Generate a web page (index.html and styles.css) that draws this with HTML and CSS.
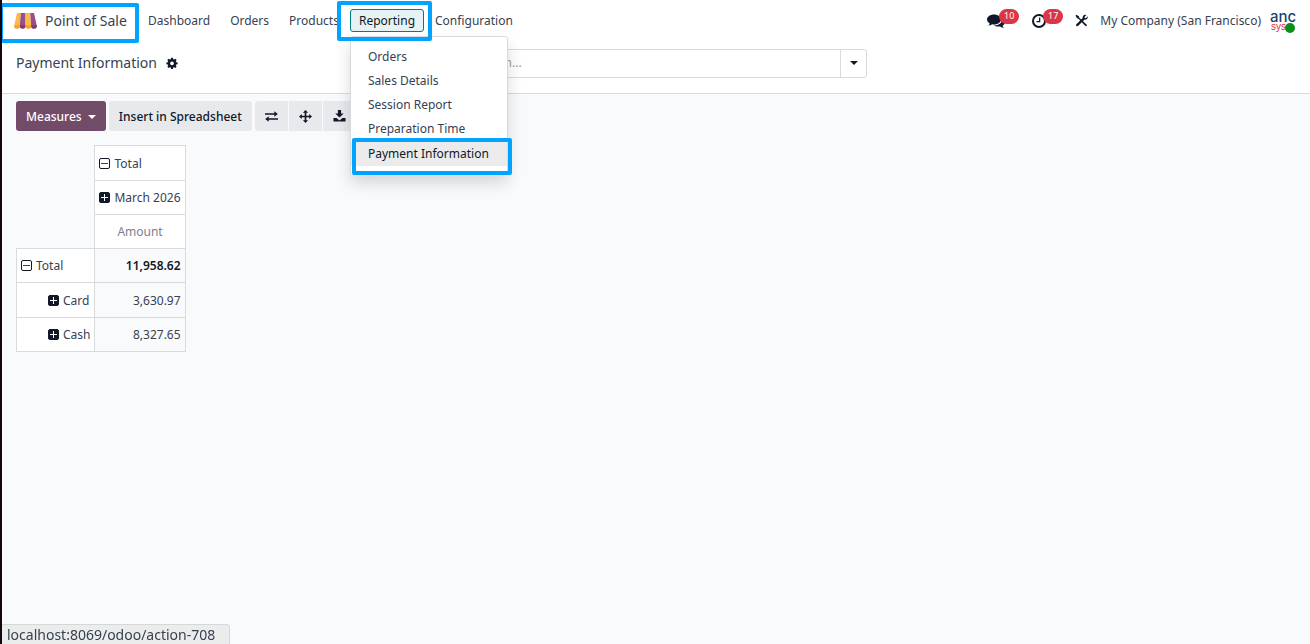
FILE: index.html
```html
<!DOCTYPE html>
<html lang="en">
  <head>
    <meta charset="UTF-8" />
    <meta name="viewport" content="width=device-width, initial-scale=1.0" />
    <title>Payment Information</title>
    <link rel="stylesheet" href="styles.css">
  </head>

  <body>
    <!-- Navbar -->
    <header class="navbar">
      <a class="brand highlight" href="#">
        <svg class="brand-logo" viewBox="0 0 24 18">
          <path fill="#fbb945" d="M3 1h4L6 14.500a3 3 0 0 1-6 0z" />
          <path fill="#985184" d="M7 1h5v13.500a3 3 0 0 1-6 0z" />
          <path fill="#fbb945" d="M12 1h5l1 13.500a3 3 0 0 1-6 0z" />
          <path fill="#985184" d="M17 1h4l3 13.500a3 3 0 0 1-6 0z" />
          <path fill="#f9a02c" d="M0 14h6v.5a3 3 0 0 1-6 0zM12 14h6v.5a3 3 0 0 1-6 0z" />
          <path fill="#7d3b6f" d="M6 14h6v.5a3 3 0 0 1-6 0zM18 14h6v.5a3 3 0 0 1-6 0z" />
        </svg>
        Point of Sale
      </a>
      <nav class="menu">
        <button class="menu-item" type="button">Dashboard</button>
        <button class="menu-item" type="button">Orders</button>
        <button class="menu-item" type="button">Products</button>
        <div class="dropdown">
          <button class="menu-item active highlight" type="button">Reporting</button>
          <ul class="dropdown-menu">
            <li><a href="#">Orders</a></li>
            <li><a href="#">Sales Details</a></li>
            <li><a href="#">Session Report</a></li>
            <li><a href="#">Preparation Time</a></li>
            <li><a class="selected highlight" href="#">Payment Information</a></li>
          </ul>
        </div>
        <button class="menu-item" type="button">Configuration</button>
      </nav>

      <div class="systray">
        <button class="tray-btn" type="button" aria-label="Messages">
          <svg class="tray-icon" viewBox="0 0 18 16">
            <path d="M7 1.500c3.900 0 7 2.200 7 5s-3.100 5-7 5c-.6 0-1.200 0-1.800-.2-1.100.8-2.400 1.200-3.900 1.300.7-.6 1.200-1.300 1.400-2.200C1 9.500 0 8 0 6.500c0-2.800 3.100-5 7-5z" />
            <path d="M15.200 5.500c1.700.9 2.800 2.200 2.800 3.700s-1 2.700-2.400 3.500c.2.800.6 1.400 1.300 2-1.500-.1-2.800-.5-3.900-1.300-2.300.4-4.600 0-6.200-1 4.800.2 8.900-2.500 8.400-6.900z" />
          </svg>
          <span class="badge">10</span>
        </button>
        <button class="tray-btn" type="button" aria-label="Activities">
          <svg class="tray-icon" viewBox="0 0 18 16">
            <circle cx="8" cy="8" r="6" fill="none" stroke="#111827" stroke-width="2" />
            <path d="M8 4.500h1.300V9.300H5.500V8H8z" />
          </svg>
          <span class="badge">17</span>
        </button>
        <button class="tray-btn" type="button" aria-label="Debug">
          <svg class="debug-icon" viewBox="0 0 16 16">
            <path d="M1.500.8l3.300 2 .5 1.800 8.900 8.200c.7.700.5 1.400.1 1.800s-1.200.5-1.800-.1L4.300 5.700l-1.800-.5L.7 2z" />
            <path d="M14 1.300l-2.300 2.300.4 1.200 1.200.4 2.200-2.300c.7 2.500-1.300 4.500-3.700 4L4 14.500c-1.500 1.500-3.700-.6-2.300-2L9.500 5C9 2.500 11.300.3 14 1.300z" />
          </svg>
        </button>
        <button class="company" type="button">My Company (San Francisco)</button>
        <button class="avatar" type="button" aria-label="User menu">
          <svg class="avatar-logo" viewBox="0 0 26 24">
            <text class="logo-top" x="0" y="13">anc</text>
            <text class="logo-bottom" x="1" y="21">sys</text>
            <circle cx="20" cy="19" r="5" fill="#0b8f1a" />
          </svg>
        </button>
      </div>
    </header>

    <!-- Control panel -->
    <div class="control-panel">
      <h1 class="title">
        Payment Information
        <svg class="cog" viewBox="0 0 16 16">
          <path fill-rule="evenodd" d="M6.800 1h2.400l.4 1.900 1.200.5 1.700-1.100 1.700 1.700-1.100 1.700.5 1.200 1.900.4v2.400l-1.900.4-.5 1.200 1.100 1.700-1.700 1.700-1.700-1.100-1.200.5-.4 1.900H6.800l-.4-1.900-1.200-.5-1.700 1.100L1.800 13l1.100-1.700-.5-1.200L.5 9.700V7.300l1.900-.4.5-1.200L1.800 4l1.700-1.700 1.700 1.100 1.200-.5zM8 5.900a2.500 2.500 0 1 0 0 5 2.500 2.500 0 0 0 0-5z" />
        </svg>
      </h1>
      <div class="search">
        <input class="search-input" type="text" placeholder="Search..." aria-label="Search" />
        <button class="search-toggle" type="button" aria-label="Search options"><span class="caret"></span></button>
      </div>
    </div>

    <!-- Pivot view -->
    <main class="pivot">
      <div class="toolbar">
        <button class="btn primary" type="button">Measures <span class="caret"></span></button>
        <button class="btn" type="button">Insert in Spreadsheet</button>
        <div class="btn-group">
          <button class="btn icon-btn" type="button" aria-label="Flip axis">
            <svg class="icon" viewBox="0 0 14 14">
              <path d="M0 3.500h10V1.300L13.800 4.300 10 7.300V5.200H0zM14 8.800H4V6.700L.2 9.700 4 12.700V10.500h10z" />
            </svg>
          </button>
          <button class="btn icon-btn" type="button" aria-label="Expand all">
            <svg class="icon" viewBox="0 0 14 14">
              <path d="M7 0l2.800 3H7.900v3.100H11V4.200L14 7l-3 2.800V7.900H7.900V11h1.900L7 14l-2.800-3h1.900V7.900H3v1.900L0 7l3-2.800v1.900h3.100V3H4.200z" />
            </svg>
          </button>
          <button class="btn icon-btn" type="button" aria-label="Download">
            <svg class="icon" viewBox="0 0 14 14">
              <path d="M5.300 0h3.400v3.700h2.800L7 8.200 2.500 3.700h2.800z" />
              <path d="M.5 8.500h3.300L7 11.300l3.200-2.800h3.300v4H.5z" />
            </svg>
          </button>
        </div>
      </div>

      <table class="pivot-table">
        <tr>
          <td class="empty" rowspan="3"></td>
          <th class="tall"><span class="box minus"></span>Total</th>
        </tr>
        <tr>
          <th><span class="box plus"></span>March 2026</th>
        </tr>
        <tr>
          <th class="measure">Amount</th>
        </tr>
        <tr>
          <th><span class="box minus"></span>Total</th>
          <td class="total">11,958.62</td>
        </tr>
        <tr>
          <th class="child tall"><span class="box plus"></span>Card</th>
          <td>3,630.97</td>
        </tr>
        <tr>
          <th class="child"><span class="box plus"></span>Cash</th>
          <td>8,327.65</td>
        </tr>
      </table>
    </main>

    <div class="status-bar">localhost:8069/odoo/action-708</div>
  </body>
</html>
```
FILE: styles.css
```css
* {
  box-sizing: border-box;
  margin: 0;
  padding: 0;
}

body {
  min-height: 100vh;
  border-left: 2px solid #14060f;
  background-color: #f9fafb;
  color: #374151;
  font-family: "Noto Sans", "Open Sans", sans-serif;
  font-size: 12px;
  line-height: 18px;
}

button,
input {
  border: none;
  background: none;
  color: inherit;
  font: inherit;
}

a {
  color: inherit;
  text-decoration: none;
}

svg {
  display: block;
  fill: #111827;
}

/* blue frames around the steps */
.highlight {
  position: relative;
}

.highlight::after {
  content: "";
  position: absolute;
  z-index: 5;
  border: 4px solid #00a3ff;
  border-radius: 2px;
  pointer-events: none;
}

/* Navbar */
.navbar {
  display: flex;
  align-items: center;
  height: 41px;
  padding-right: 14px;
  background-color: white;
}

.brand {
  display: flex;
  align-items: center;
  gap: 8px;
  width: 137px;
  height: 41px;
  padding-left: 12px;
  font-size: 14px;
  white-space: nowrap;
}

.brand::after {
  inset: 3px 0 -2px -3px;
}

.brand-logo {
  width: 23px;
  height: 17px;
}

.menu {
  display: flex;
  align-items: center;
  gap: 2px;
}

.menu-item {
  height: 23px;
  padding: 0 8px;
  border: 1px solid transparent;
  border-radius: 3px;
}

.menu-item.active {
  border-color: #017e84;
  background-color: #e6f2f3;
  color: #111827;
}

.menu-item.active::after {
  inset: -9px -9px -10px -14px;
}

.dropdown {
  position: relative;
}

.dropdown-menu {
  position: absolute;
  z-index: 2;
  top: 27px;
  left: 0;
  width: 158px;
  padding: 8px 0;
  border: 1px solid #d8dadd;
  border-radius: 3px;
  background-color: white;
  box-shadow: 0 8px 16px rgba(0, 0, 0, 0.15);
  list-style: none;
}

.dropdown-menu a {
  display: block;
  padding: 3px 17px;
  white-space: nowrap;
}

.dropdown-menu .selected {
  margin-top: 1px;
  background-color: #ebebeb;
  color: #111827;
}

.selected::after {
  inset: -4px -5px -9px 1px;
}

.systray {
  display: flex;
  align-items: center;
  margin-left: auto;
}

.tray-btn {
  position: relative;
  margin-right: 12px;
}

.tray-icon {
  width: 18px;
  height: 16px;
  margin-right: 14px;
}

.debug-icon {
  width: 13px;
  height: 13px;
}

.badge {
  position: absolute;
  top: -4px;
  right: 0;
  width: 20px;
  height: 15px;
  border-radius: 8px;
  background-color: #dc3545;
  color: white;
  font-size: 9px;
  line-height: 14px;
}

.avatar {
  margin-left: 9px;
}

.avatar-logo {
  width: 26px;
  height: 24px;
}

.logo-top {
  fill: #17456f;
  font: 500 15px Inter, sans-serif;
}

.logo-bottom {
  fill: #e02b35;
  font: 10px "Liberation Sans", sans-serif;
}

/* Control panel */
.control-panel {
  display: grid;
  grid-template-columns: 1fr 422px 1fr;
  align-items: center;
  height: 53px;
  padding: 0 14px 8px;
  border-bottom: 1px solid #d8dadd;
  background-color: white;
}

.title {
  display: flex;
  align-items: center;
  gap: 9px;
  font-size: 14px;
  font-weight: 400;
}

.cog {
  width: 12px;
  height: 12px;
}

.search {
  display: flex;
  height: 29px;
  border: 1px solid #d8dadd;
  border-radius: 3px;
}

.search-input {
  flex: 1;
  padding-left: 28px;
}

.search-input::placeholder {
  color: #9a9ca5;
}

.search-toggle {
  width: 26px;
  border-left: 1px solid #d8dadd;
}

.caret {
  display: inline-block;
  border: 4px solid transparent;
  border-top-color: currentColor;
  border-bottom: none;
  vertical-align: 2px;
}

.search-toggle .caret {
  color: #111827;
}

/* Pivot view */
.pivot {
  padding: 7px 14px;
}

.toolbar {
  display: flex;
  gap: 3px;
}

.btn {
  height: 30px;
  padding: 1px 10px 0;
  border-radius: 3px;
  background-color: #e7e9ed;
  color: #111827;
  font-weight: 500;
}

.btn.primary {
  background-color: #714b67;
  color: white;
}

.primary .caret {
  margin-left: 3px;
}

.btn-group {
  display: flex;
  gap: 1px;
}

.icon-btn {
  padding: 0 10px;
  border-radius: 0;
}

.icon-btn:first-child {
  border-radius: 3px 0 0 3px;
}

.icon {
  width: 13px;
  height: 13px;
}

.pivot-table {
  margin-top: 14px;
  border-collapse: collapse;
}

.pivot-table th,
.pivot-table td {
  height: 34px;
  padding: 1px 4px 0;
  border: 1px solid #d8dadd;
  font-weight: 400;
  text-align: right;
}

.pivot-table th {
  background-color: white;
  text-align: left;
}

.pivot-table .tall {
  height: 35px;
}

.pivot-table .empty {
  border-top: none;
  border-left: none;
}

.pivot-table .measure {
  color: #7c818c;
  text-align: center;
}

.pivot-table .child {
  padding-left: 31px;
}

.pivot-table .total {
  color: #111827;
  font-weight: 600;
}

.box {
  display: inline-block;
  width: 11px;
  height: 11px;
  margin-right: 4px;
  border: 1px solid #111827;
  border-radius: 2px;
  vertical-align: -1px;
}

.box.minus {
  background: linear-gradient(#374151, #374151) center / 7px 1px no-repeat;
}

.box.plus {
  background:
    linear-gradient(white, white) center / 7px 1px no-repeat,
    linear-gradient(white, white) center / 1px 7px no-repeat,
    #111827;
}

/* link preview at the bottom of the window */
.status-bar {
  position: fixed;
  bottom: 0;
  left: 2px;
  height: 20px;
  padding: 0 14px 0 5px;
  border: 1px solid #d5d7d8;
  border-bottom: none;
  border-left: none;
  border-radius: 0 4px 0 0;
  background-color: #ebecec;
  font-size: 14px;
  line-height: 20px;
}
```
